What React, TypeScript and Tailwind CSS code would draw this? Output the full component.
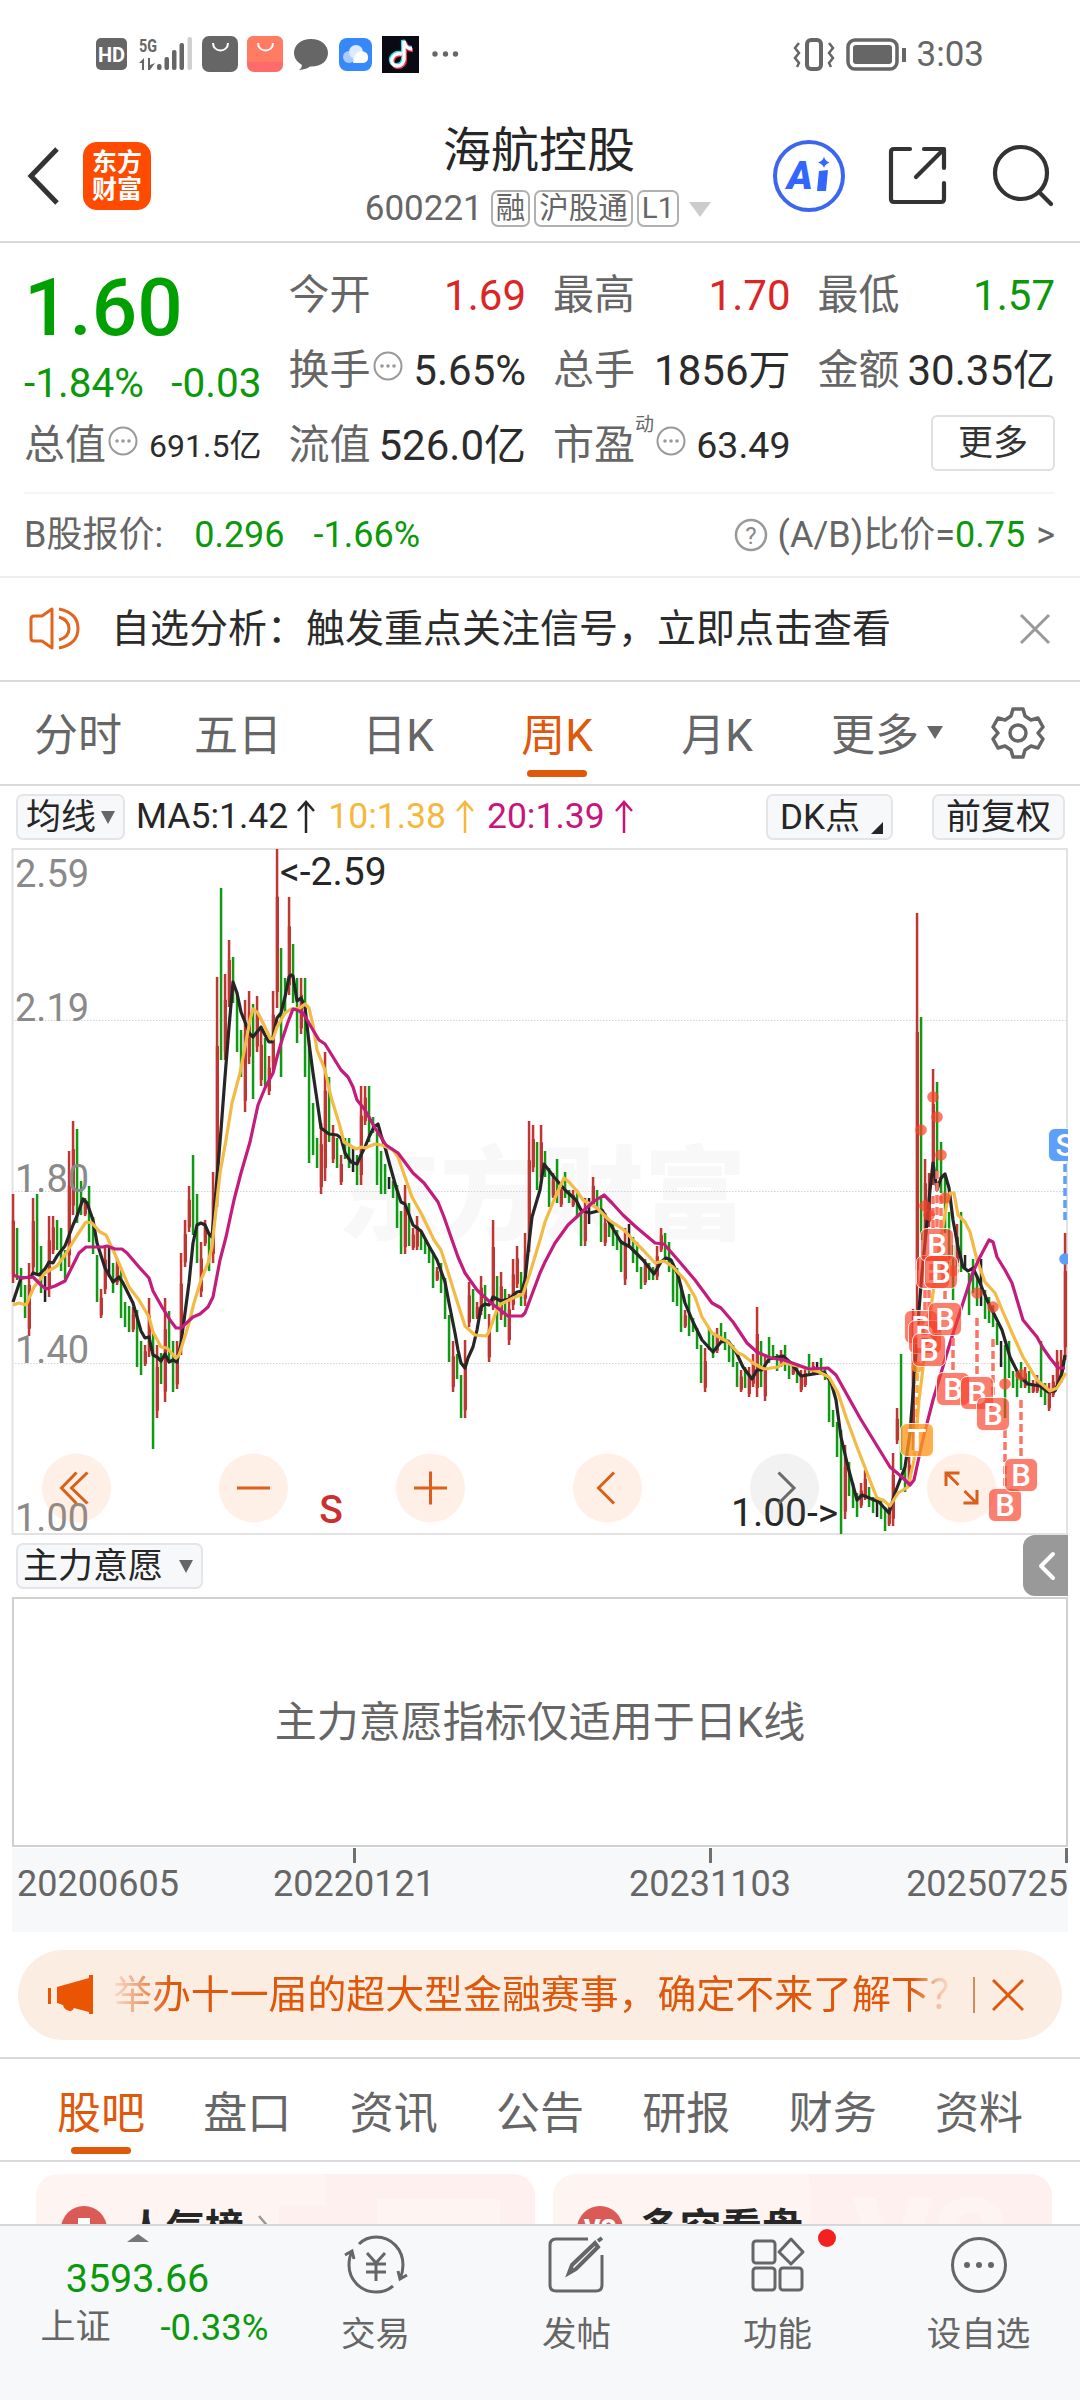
import React from 'react';
import clsx from 'clsx';

type Tone = 'up' | 'down' | 'plain';

const toneClasses: Record<Tone, string> = {
    up: 'text-[#dc2626]',
    down: 'text-[#0b980b]',
    plain: 'text-[#2b2b2b]'
};

// Weekly bars, one per 4px: colour, high, low
const candles = `
r1194-1283 g1228-1280 g1268-1297 g1285-1318 r1263-1336 r1198-1275 g1194-1275 g1246-1293 k1276-1302 r1216-1297
r1216-1254 g1220-1250 g1228-1271 g1250-1279 r1151-1267 r1121-1215 g1129-1223 g1181-1215 r1198-1216 g1186-1242
g1217-1254 g1255-1302 r1289-1318 r1245-1294 k1247-1277 g1263-1293 r1258-1285 g1268-1318 g1302-1327 g1306-1332
r1307-1332 g1310-1367 g1341-1375 r1345-1366 r1298-1357 g1332-1449 r1345-1418 g1353-1384 r1298-1402 g1311-1362
g1341-1392 r1341-1389 r1253-1355 r1220-1267 r1186-1232 g1155-1235 g1194-1263 r1242-1297 r1220-1246 g1235-1271
r1172-1263 r977-1207 g888-1060 r974-1060 r940-1007 g957-1003 g993-1052 g1030-1077 r1000-1112 r991-1064
g1004-1099 r996-1052 r1027-1086 g1038-1086 r1056-1095 r991-1070 r849-1008 g948-1077 g978-1013 r897-995
g944-1003 g978-1043 r978-1034 g978-1077 g1040-1163 g1103-1155 g1138-1168 r1123-1194 r1052-1181 g1077-1142
r1125-1163 g1138-1168 r1155-1185 g1138-1159 g1138-1168 k1147-1172 g1155-1185 r1086-1185 r1086-1125 g1086-1142
g1117-1133 g1133-1185 g1151-1194 g1164-1194 k1177-1189 g1181-1198 g1185-1228 g1211-1254 r1185-1254 g1203-1246
r1228-1250 r1216-1250 g1232-1250 g1240-1254 g1247-1263 g1252-1288 r1267-1281 g1263-1293 g1278-1319 g1315-1362
r1341-1392 g1354-1379 g1375-1418 r1340-1418 r1282-1327 g1289-1319 r1302-1319 r1276-1315 g1285-1319 r1314-1362
r1220-1310 g1276-1332 r1272-1320 g1289-1327 r1294-1345 r1259-1310 r1246-1288 g1272-1306 r1233-1306 r1121-1252
r1125-1172 g1142-1190 r1125-1183 g1151-1177 g1168-1207 r1173-1198 g1159-1203 r1183-1207 g1172-1198 g1190-1203
r1190-1207 g1190-1216 g1211-1246 r1198-1246 k1198-1224 r1177-1207 g1190-1210 g1198-1242 r1213-1246 g1220-1237
g1223-1246 g1230-1250 g1240-1272 r1228-1285 k1224-1247 g1237-1263 g1242-1272 g1267-1289 r1259-1285 g1263-1280
g1267-1280 r1246-1280 r1228-1252 g1233-1258 g1242-1272 g1263-1302 g1268-1306 g1285-1332 r1310-1328 g1294-1336
g1318-1332 g1328-1349 g1345-1383 r1348-1392 g1328-1350 g1332-1358 r1328-1353 g1323-1343 g1332-1350 g1341-1362
g1345-1367 g1362-1387 r1370-1392 g1367-1388 r1367-1397 r1354-1387 r1307-1397 g1341-1387 r1354-1401 g1337-1363
g1345-1357 g1354-1371 r1350-1367 g1345-1371 g1362-1379 r1363-1375 g1365-1383 r1370-1392 r1367-1387 g1354-1375
r1362-1375 k1362-1375 g1358-1375 g1367-1380 g1380-1422 g1410-1427 g1422-1457 g1430-1534 r1445-1519 g1462-1496
g1483-1508 g1493-1517 r1483-1508 r1470-1500 g1487-1507 g1497-1513 k1497-1517 g1500-1519 g1507-1531 r1505-1526
r1453-1526 r1408-1444 g1354-1470 g1467-1492 r1457-1483 r1309-1450 r913-1310 g1017-1240 r1159-1240 r1173-1227
r1069-1185 g1082-1173 g1142-1193 g1177-1233 g1212-1267 g1245-1300 r1224-1267 g1212-1272 k1255-1270 g1273-1315
g1259-1293 g1277-1306 k1259-1306 g1290-1319 g1297-1323 g1305-1327 g1323-1345 k1341-1367 g1345-1418 g1341-1378
g1371-1388 g1371-1397 g1362-1388 r1367-1388 g1371-1393 r1380-1393 r1375-1393 g1341-1397 g1383-1405 r1383-1411
r1375-1397 r1350-1388 r1350-1383 r1233-1360
`.trim().split(/\s+/).map((bar, i) => {
    const [high, low] = bar.slice(1).split('-').map(Number);
    return { kind: bar[0], x: 13 + i * 4, high, low };
});

const candleColors: Record<string, string> = { r: '#c03632', g: '#109a14', k: '#222222' };

const ma5 =
    '13,1302 21,1278 31,1277 33,1273 39,1275 45,1269 49,1262 53,1263 57,1256 65,1246 73,1225 77,1216 83,1199 87,1203 93,1220 97,1243 105,1268 113,1282 119,1277 123,1283 133,1303 141,1331 145,1338 149,1337 153,1355 157,1357 161,1361 165,1354 169,1362 173,1360 177,1362 181,1343 189,1283 193,1243 197,1225 201,1223 205,1225 209,1234 212,1237 216,1190 221,1130 225,1077 229,1027 233,982 237,993 241,1012 245,1022 249,1033 253,1037 257,1032 261,1027 265,1035 269,1042 272,1042 277,1018 281,1013 285,997 289,977 291,975 293,976 297,1001 301,998 305,1007 309,1043 313,1073 317,1100 321,1128 329,1134 337,1135 341,1138 345,1153 351,1162 357,1164 361,1155 365,1147 369,1137 374,1127 378,1124 381,1135 385,1147 389,1162 396,1187 401,1202 405,1204 413,1225 421,1231 429,1246 437,1260 445,1282 449,1303 455,1333 458,1350 461,1363 465,1368 468,1358 473,1347 477,1330 481,1307 485,1304 489,1305 493,1297 501,1301 509,1299 517,1292 522,1291 525,1280 529,1243 532,1217 537,1200 540,1190 544,1164 554,1177 565,1190 576,1200 581,1210 590,1213 602,1210 609,1222 621,1242 630,1247 643,1260 654,1274 661,1262 666,1258 671,1260 678,1275 685,1303 693,1322 702,1340 713,1352 721,1342 728,1341 736,1352 743,1367 752,1379 757,1370 762,1370 769,1359 783,1356 791,1363 801,1376 814,1374 824,1372 831,1382 836,1400 841,1437 848,1467 857,1500 862,1495 879,1502 889,1513 895,1493 905,1467 910,1433 915,1367 919,1310 922,1273 926,1233 930,1190 933,1163 937,1190 941,1178 945,1174 949,1188 953,1220 958,1247 963,1267 968,1271 973,1268 980,1283 987,1300 993,1312 1002,1330 1010,1357 1020,1377 1028,1384 1040,1386 1048,1392 1055,1391 1062,1373 1065,1355';
const ma10 =
    '13,1305 19,1303 26,1305 34,1287 45,1273 57,1266 65,1255 76,1237 86,1222 92,1223 100,1232 106,1235 113,1250 121,1268 129,1287 139,1300 149,1317 153,1332 161,1347 167,1348 176,1358 179,1355 186,1333 189,1323 194,1303 201,1280 208,1263 212,1247 217,1200 220,1173 226,1140 232,1103 240,1073 245,1047 250,1020 253,1009 258,1013 265,1027 270,1038 273,1039 277,1027 285,1013 291,1009 300,1008 305,1004 309,1008 313,1025 317,1050 325,1070 331,1097 339,1123 344,1142 356,1149 362,1147 365,1148 375,1144 382,1145 393,1150 398,1157 405,1177 412,1197 422,1215 434,1240 441,1250 448,1272 456,1298 465,1326 475,1335 486,1336 489,1332 496,1312 501,1304 513,1298 523,1294 530,1273 540,1240 545,1222 554,1200 564,1178 569,1182 576,1190 583,1200 597,1208 609,1220 624,1230 633,1240 643,1250 655,1263 664,1261 673,1267 685,1280 695,1297 702,1317 712,1333 728,1342 738,1353 743,1355 753,1363 764,1369 778,1367 784,1363 802,1367 819,1372 829,1377 838,1393 846,1417 857,1447 871,1483 877,1498 883,1500 890,1506 898,1493 908,1487 914,1460 919,1400 924,1360 933,1293 940,1243 947,1203 950,1193 954,1193 958,1215 965,1222 970,1232 977,1260 985,1282 995,1293 1003,1312 1013,1335 1023,1357 1037,1380 1050,1391 1057,1388 1063,1378 1066,1373';
const ma20 =
    '13,1275 21,1278 33,1277 41,1285 46,1289 55,1286 65,1281 72,1267 79,1253 86,1247 103,1247 107,1246 115,1249 122,1249 127,1253 139,1267 149,1278 153,1291 162,1307 170,1320 176,1328 181,1328 193,1317 200,1314 208,1307 213,1297 220,1260 226,1237 234,1200 241,1173 250,1142 258,1105 265,1088 273,1073 277,1057 282,1040 288,1022 293,1009 297,1010 303,1013 310,1025 319,1040 325,1044 341,1070 348,1077 353,1087 357,1100 365,1110 375,1128 386,1145 398,1153 413,1173 424,1183 438,1202 444,1217 452,1240 458,1257 465,1273 477,1290 491,1303 508,1316 522,1316 525,1313 540,1273 545,1262 555,1243 568,1225 581,1213 593,1202 604,1195 612,1203 623,1215 636,1227 655,1243 664,1244 678,1260 695,1280 712,1303 721,1308 733,1322 747,1343 757,1352 771,1358 784,1360 809,1369 828,1368 836,1375 860,1418 890,1467 902,1477 910,1485 914,1480 922,1443 933,1400 950,1343 973,1272 980,1257 989,1240 993,1242 997,1257 1005,1270 1012,1283 1023,1320 1037,1337 1043,1348 1050,1358 1058,1368 1065,1368';

const buyMarks = [
    [921, 1327], [925, 1337], [933, 1272], [937, 1245], [941, 1272], [929, 1350],
    [945, 1319], [953, 1389], [977, 1393], [993, 1414], [1005, 1505], [1021, 1475]
];
const buyDots = [
    [933, 1097], [937, 1117], [921, 1130], [941, 1155], [945, 1198], [925, 1206],
    [929, 1215], [953, 1271], [977, 1293], [993, 1307], [1005, 1384], [1021, 1375]
];
const buyDashes = [
    [933, 1196, 1229], [937, 1171, 1229], [941, 1196, 1229], [925, 1290, 1310], [929, 1290, 1334],
    [945, 1291, 1303], [953, 1338, 1373], [977, 1318, 1376], [993, 1339, 1398], [1005, 1430, 1489], [1021, 1400, 1459]
];

const Mark: React.FC<{ x: number; y: number; label: string; color: string }> = ({ x, y, label, color }) => (
    <g>
        <rect x={x - 16.5} y={y - 16.5} width="33" height="33" rx="6.5" fill={color} stroke="#ffffff" strokeOpacity="0.85" />
        <text x={x} y={y + 11} textAnchor="middle" fontSize="31" fontWeight="500" fill="#ffffff">
            {label}
        </text>
    </g>
);

const ChartButton: React.FC<{ x: number; muted?: boolean; children: React.ReactNode }> = ({ x, muted, children }) => (
    <g transform={`translate(${x} 1488)`} fill="none" stroke={muted ? '#6b6b6b' : '#d9601a'} strokeWidth="3">
        <circle r="34.5" fill={muted ? '#888888' : '#fa7a3c'} fillOpacity={muted ? 0.11 : 0.12} stroke="none" />
        {children}
    </g>
);

const KLineChart: React.FC = () => (
    <svg className="block w-full" height="687" viewBox="0 848 1080 687">
        <clipPath id="plot">
            <rect x="0" y="848" width="1068" height="687" />
        </clipPath>
        <text x="338" y="1232" fontSize="102" fontWeight="900" fill="#f8f8f8">东方财富</text>
        <g stroke="#d4d4d4" strokeWidth="1.2" strokeDasharray="1.5 1.5">
            <path d="M12 1020.5H1067M12 1191.5H1067M12 1363.5H1067" />
        </g>
        <rect x="12.5" y="849" width="1054.5" height="685" fill="none" stroke="#e2e2e2" strokeWidth="2" />
        {candles.map((c) => (
            <g key={c.x} fill={candleColors[c.kind]}>
                <rect x={c.x - 1.2} y={c.high} width="2.5" height={c.low - c.high} />
                {c.kind === 'r' && (
                    <rect x={c.x - 1.2} y={c.high + (c.low - c.high) * 0.3} width="3.2" height={(c.low - c.high) * 0.6} />
                )}
            </g>
        ))}
        <g fill="none" strokeWidth="3.2" strokeLinejoin="round">
            <polyline points={ma5} stroke="#262626" />
            <polyline points={ma10} stroke="#f3ba45" />
            <polyline points={ma20} stroke="#c41c7c" />
        </g>
        <g fontSize="38" fill="#8a8a8a">
            <text x="15" y="887">2.59</text>
            <text x="15" y="1021">2.19</text>
            <text x="15" y="1192">1.80</text>
            <text x="15" y="1363">1.40</text>
            <text x="15" y="1531">1.00</text>
        </g>
        <g fontSize="39" fill="#262626">
            <text x="280" y="885">&lt;-2.59</text>
            <text x="731" y="1526">1.00-&gt;</text>
        </g>
        <text x="331" y="1523" textAnchor="middle" fontSize="39" fontWeight="500" fill="#cc2f2f">S</text>

        <ChartButton x={76.5}>
            <path d="M0 -15.500L-15 0L0 15.500M11 -15.500L-5 0L11 15.500" />
        </ChartButton>
        <ChartButton x={253.5}>
            <path d="M-16.500 0H16.500" />
        </ChartButton>
        <ChartButton x={430.5}>
            <path d="M-16.500 0H16.500M0 -16.500V16.500" />
        </ChartButton>
        <ChartButton x={607.5}>
            <path d="M6.500 -15.500L-9 0L6.500 15.500" />
        </ChartButton>
        <ChartButton x={784.5} muted>
            <path d="M-6 -15.500L9.500 0L-6 15.500" />
        </ChartButton>
        <ChartButton x={961.5}>
            <path d="M-15.500 -2V-15H-2M-15 -15L-3 -3M15.500 2V15H2M15 15L3 3" />
        </ChartButton>

        <g clipPath="url(#plot)">
            <g stroke="#fb7564" strokeWidth="3.5" strokeDasharray="8 4">
                {buyDashes.map(([x, y1, y2]) => (
                    <line key={x} x1={x} x2={x} y1={y1} y2={y2} />
                ))}
            </g>
            <line x1="917" x2="917" y1="1373" y2="1424" stroke="#ffa53a" strokeWidth="3.5" strokeDasharray="8 4" />
            <line x1="1065" x2="1065" y1="1164" y2="1222" stroke="#5f9ffc" strokeWidth="3.5" strokeDasharray="8 4" />
            {buyDots.map(([x, y]) => (
                <circle key={`${x}-${y}`} cx={x} cy={y} r="5.8" fill="#f9452c" fillOpacity="0.72" />
            ))}
            <circle cx="917" cy="1367" r="5.8" fill="#ff9a20" fillOpacity="0.8" />
            <circle cx="1065" cy="1259" r="5.8" fill="#5f9ffc" />
            {buyMarks.map(([x, y]) => (
                <Mark key={`${x}-${y}`} x={x} y={y} label="B" color="rgba(249,66,42,0.68)" />
            ))}
            <Mark x={917} y={1440} label="T" color="rgba(255,153,35,0.8)" />
            <Mark x={1065} y={1145} label="S" color="#5f9ffc" />
        </g>
    </svg>
);

const StatusBar: React.FC = () => (
    <div className="flex h-[110px] items-start justify-between pl-[80px] pr-[96px] pt-[25px] text-[#666]">
        <svg width="400" height="60" viewBox="0 0 400 60" fill="#666666">
            <rect x="16" y="13" width="31" height="32" rx="5" />
            <text x="31.500" y="37" textAnchor="middle" fontSize="20" fontWeight="700" fill="#ffffff">HD</text>
            <text x="59" y="27" fontSize="19" fontWeight="700" textLength="18" lengthAdjust="spacingAndGlyphs">5G</text>
            <path d="M59 38L64 33V45H62V38ZM68 33H70V40L75 38L70 45H68Z" />
            <rect x="77" y="39" width="4.500" height="6" rx="2" />
            <rect x="84.500" y="32" width="4.500" height="13" rx="2" />
            <rect x="92" y="25" width="4.500" height="20" rx="2" />
            <rect x="99.500" y="18" width="4.500" height="27" rx="2" />
            <rect x="107.500" y="12" width="4.500" height="33" rx="2" fill="#d0d0d0" />
            <rect x="122" y="11" width="36" height="36" rx="7" />
            <path d="M133 18C133 28 148 28 148 18" fill="none" stroke="#ffffff" strokeWidth="2" />
            <rect x="167" y="11" width="36" height="36" rx="7" fill="#ff6a6a" />
            <path d="M167 37V18Q167 11 174 11H196Q203 11 203 18V37Z" fill="#ff7b62" />
            <path d="M178 18C178 28 193 28 193 18" fill="none" stroke="#ffffff" strokeWidth="2" />
            <path d="M231 14C221 14 214 20 214 28C214 33 217 37 222 40Q222 43 219 45Q227 44 230 41.500C241 42 248 36 248 28C248 20 241 14 231 14Z" />
            <rect x="259" y="13" width="33" height="33" rx="8" fill="#3789fb" />
            <circle cx="269" cy="32" r="6" fill="#a9cdff" />
            <circle cx="276" cy="27" r="7" fill="#dcebff" />
            <path d="M273 38Q274 26 282 26Q289 27 288 34Q287 38 282 38Z" fill="#ffffff" />
            <rect x="302" y="11" width="37" height="37" fill="#0a0a14" />
            <g fill="none" strokeWidth="4">
                <path d="M321 28C310 26 307 39 316 40C320 40 323 37 323 33V15C324 20 327 23 332 23" stroke="#25e0e0" />
                <path d="M323 30C312 28 309 41 318 42C322 42 325 39 325 35V17C326 22 329 25 333 25" stroke="#f5315a" />
                <path d="M322 29C311 27 308 40 317 41C321 41 324 38 324 34V16C325 21 328 24 332 24" stroke="#ffffff" strokeWidth="3.500" />
            </g>
            <circle cx="355" cy="29" r="2.700" />
            <circle cx="365.500" cy="29" r="2.700" />
            <circle cx="375.500" cy="29" r="2.700" />
        </svg>
        <div className="flex items-center pt-[11px]">
            <svg width="124" height="36" viewBox="0 0 124 36" fill="none" stroke="#666666">
                <rect x="14" y="3" width="14" height="29" rx="4" strokeWidth="4" />
                <path d="M6 6L2 11L6 16L2 21L6 26L4 30M36 6L40 11L36 16L40 21L36 26L38 30" strokeWidth="2.500" />
                <rect x="55" y="3" width="49" height="29" rx="7" strokeWidth="3.500" />
                <rect x="60" y="8" width="39" height="19" rx="3" fill="#666666" stroke="none" />
                <path d="M111 11V25" strokeWidth="4" />
            </svg>
            <span className="pt-px text-[35px] leading-[36px]">3:03</span>
        </div>
    </div>
);

const Tag: React.FC<{ children: React.ReactNode }> = ({ children }) => (
    <span className="flex h-[37px] shrink-0 items-center whitespace-nowrap rounded-[7px] border-2 border-[#b0b0b0] px-[3px] text-[29.500px] leading-none">
        {children}
    </span>
);

const Header: React.FC = () => (
    <header className="flex h-[133px] items-center border-b-2 border-[#d9d9d9] pl-[26px] pr-[26px]">
        <svg width="36" height="60" viewBox="0 0 36 60" fill="none" stroke="#333333" strokeWidth="5">
            <path d="M31 3L5 30L31 57" />
        </svg>
        <div className="ml-[21px] flex size-[68px] flex-col items-center justify-center rounded-[14px] bg-[#ff4b00] text-[25px] font-bold leading-[27px] text-white">
            <span>东方</span>
            <span>财富</span>
        </div>
        <div className="ml-[212px] flex w-[350px] flex-col items-center">
            <h1 className="ml-[2px] text-[48px] leading-[56px] text-[#262626]">海航控股</h1>
            <div className="mt-[10px] flex items-center gap-[4px] text-[#666]">
                <span className="mr-[4px] text-[35px] leading-[40px]">600221</span>
                <Tag>融</Tag>
                <Tag>沪股通</Tag>
                <Tag>L1</Tag>
                <svg className="ml-[6px] shrink-0" width="22" height="16" viewBox="0 0 22 16">
                    <path d="M0 1H22L11 16Z" fill="#cccccc" />
                </svg>
            </div>
        </div>
        <svg className="ml-auto" width="74" height="74" viewBox="0 0 74 74">
            <circle cx="37" cy="37" r="34" fill="none" stroke="#3d66f0" strokeWidth="4" />
            <text x="15" y="50" fontSize="39" fontWeight="900" fontStyle="italic" fill="#3366ff">A</text>
            <path d="M47 32L56 31L54 52H45Z" fill="#3366ff" />
            <path d="M52 17.500Q53 22 57.500 23.500Q53 25 52 29Q51 25 46 23.500Q51 22 52 17.500Z" fill="#3366ff" />
        </svg>
        <svg className="ml-[42px]" width="60" height="62" viewBox="0 0 60 62" fill="none" stroke="#333333" strokeWidth="4.200" strokeLinecap="round" strokeLinejoin="round">
            <path d="M22 4H6Q3 4 3 7V54Q3 57 6 57H53Q56 57 56 54V38M36 4H56V23M55 5L28 32" />
        </svg>
        <svg className="ml-[44px]" width="62" height="66" viewBox="0 0 62 66" fill="none" stroke="#333333" strokeWidth="4.200" strokeLinecap="round">
            <circle cx="29" cy="30" r="26" />
            <path d="M47 49L59 61" />
        </svg>
    </header>
);

const InfoDots: React.FC = () => (
    <svg className="ml-[2px] mb-[10px] shrink-0" width="30" height="30" viewBox="0 0 30 30">
        <circle cx="15" cy="15" r="13.500" fill="none" stroke="#999999" strokeWidth="2" />
        <g fill="#999999">
            <circle cx="9" cy="15" r="1.800" />
            <circle cx="15" cy="15" r="1.800" />
            <circle cx="21" cy="15" r="1.800" />
        </g>
    </svg>
);

interface QuoteProps {
    label: string;
    value: string;
    tone?: Tone;
    info?: boolean;
    sup?: string;
    valueClass?: string;
}

const Quote: React.FC<QuoteProps> = ({ label, value, tone = 'plain', info, sup, valueClass = 'text-[42px]' }) => (
    <div className="flex h-[75px] items-center whitespace-nowrap leading-none">
        <span className="text-[41px] text-[#666]">{label}</span>
        {sup && <span className="-mt-[42px] text-[19px] text-[#666]">{sup}</span>}
        {info && <InfoDots />}
        <span className={clsx('ml-auto', valueClass, toneClasses[tone])}>{value}</span>
    </div>
);

const QuoteBoard: React.FC = () => (
    <section className="pl-[24px] pr-[25px]">
        <div className="grid h-[251px] grid-cols-4 grid-rows-[75px_75px_75px] gap-x-[27px] border-b-2 border-[#f5f5f5] pt-[15px]">
            <div className="row-span-2 flex flex-col text-[#00a000]">
                <span className="h-[102px] text-[80px] font-medium leading-[101px]">1.60</span>
                <div className="flex justify-between text-[40.500px] leading-[47px] text-[#0b980b]">
                    <span>-1.84%</span>
                    <span>-0.03</span>
                </div>
            </div>
            <Quote label="今开" value="1.69" tone="up" />
            <Quote label="最高" value="1.70" tone="up" />
            <Quote label="最低" value="1.57" tone="down" />
            <Quote label="换手" value="5.65%" info />
            <Quote label="总手" value="1856万" />
            <Quote label="金额" value="30.35亿" />
            <Quote label="总值" value="691.5亿" info valueClass="text-[32px]" />
            <Quote label="流值" value="526.0亿" />
            <Quote label="市盈" value="63.49" info sup="动" valueClass="text-[37.500px]" />
            <div className="flex items-center justify-end">
                <button className="-mt-[5px] h-[56px] w-[124px] rounded-[6px] border-2 border-[#e0e0e0] text-[35px] leading-none text-[#333]">
                    更多
                </button>
            </div>
        </div>
        <div className="flex h-[82px] items-center text-[36px] leading-none text-[#666]">
            <span>B股报价:</span>
            <span className="ml-[31px] text-[#0b980b]">0.296</span>
            <span className="ml-[29px] text-[#0b980b]">-1.66%</span>
            <svg className="ml-auto mr-[10px]" width="34" height="34" viewBox="0 0 34 34">
                <circle cx="17" cy="17" r="15" fill="none" stroke="#999999" strokeWidth="2.500" />
                <text x="17" y="25.500" textAnchor="middle" fontSize="24" fill="#888888">?</text>
            </svg>
            <span>(A/B)比价=</span>
            <span className="text-[#0b980b]">0.75</span>
            <span className="ml-[11px]">&gt;</span>
        </div>
    </section>
);

const Notice: React.FC = () => (
    <div className="flex h-[106px] items-center border-b-2 border-t-2 border-b-[#d9d9d9] border-t-[#eeeeee] pl-[28px] pr-[29px]">
        <svg width="54" height="46" viewBox="0 0 54 46" fill="none" stroke="#e0661f" strokeWidth="3" strokeLinejoin="round">
            <path d="M24 3L14 10H6Q3 10 3 13V32Q3 35 6 35H14L24 42Z" />
            <path d="M31 11Q41 14 41 22.500Q41 31 31 34" />
            <path d="M31 3Q50 7 50 22.500Q50 38 31 42" />
        </svg>
        <p className="ml-[29px] whitespace-nowrap text-[39px] leading-none text-[#2b2b2b]">
            自选分析：触发重点关注信号，立即点击查看
        </p>
        <svg className="ml-auto" width="32" height="32" viewBox="0 0 32 32" stroke="#999999" strokeWidth="3">
            <path d="M2 2L30 30M30 2L2 30" />
        </svg>
    </div>
);

const periods = [
    { label: '分时', className: 'w-[88px]' },
    { label: '五日', className: 'ml-[72px] w-[88px]' },
    { label: '日K', className: 'ml-[76px] w-[80px]' },
    { label: '周K', className: 'ml-[79px] w-[80px]', active: true },
    { label: '月K', className: 'ml-[80px] w-[80px]' },
    { label: '更多', className: 'ml-[74px] w-[88px]' }
];

const PeriodTabs: React.FC = () => (
    <nav className="flex h-[104px] items-center border-b-2 border-[#d9d9d9] pl-[34px] pr-[35px]">
        {periods.map((p) => (
            <div
                key={p.label}
                className={clsx('flex h-full flex-col items-center whitespace-nowrap', p.className, p.active ? 'text-[#e0580c]' : 'text-[#666]')}
            >
                <span className="mt-[24px] text-[44px] leading-[60px]">{p.label}</span>
                {p.active && <span className="mt-[4px] h-[7px] w-[60px] rounded-full bg-[#e0580c]" />}
            </div>
        ))}
        <svg className="ml-[8px]" width="16" height="14" viewBox="0 0 16 14">
            <path d="M0 0H16L8 13Z" fill="#666666" />
        </svg>
        <svg className="ml-auto" width="54" height="54" viewBox="0 0 54 54" fill="none" stroke="#666666" strokeWidth="3.500" strokeLinejoin="round">
            <path d="M22 3H32L34 10L40 14L47 12L52 21L47 27L52 33L47 42L40 40L34 44L32 51H22L20 44L14 40L7 42L2 33L7 27L2 21L7 12L14 14L20 10Z" />
            <circle cx="27" cy="27" r="8" />
        </svg>
    </nav>
);

const Arrow: React.FC<{ className?: string }> = ({ className }) => (
    <svg className={className} width="20" height="34" viewBox="0 0 20 34" fill="none" stroke="currentColor" strokeWidth="2.500">
        <path d="M10 33V2M2 11L10 2L18 11" />
    </svg>
);

const Down: React.FC<{ className?: string }> = ({ className }) => (
    <svg className={className} width="14" height="13" viewBox="0 0 14 13">
        <path d="M0 0H14L7 13Z" fill="#666666" />
    </svg>
);

const pill = 'flex h-[46px] items-center rounded-[7px] border-2 border-[#e3e5e8] bg-[#f7f8fa] text-[35px] leading-none text-[#262626]';

const IndicatorRow: React.FC = () => (
    <div className="flex h-[62px] items-center whitespace-nowrap pl-[16px] pr-[15px] text-[35.500px] leading-none text-[#262626]">
        <div className={clsx(pill, 'w-[109px] pl-[8px]')}>
            均线
            <Down className="ml-[5px]" />
        </div>
        <span className="ml-[11px]">MA5:1.42</span>
        <Arrow className="ml-[8px]" />
        <span className="ml-[12px] flex items-center text-[#f5b83d]">
            10:1.38
            <Arrow className="ml-[9px]" />
        </span>
        <span className="ml-[12px] flex items-center text-[#c8157c]">
            20:1.39
            <Arrow className="ml-[9px]" />
        </span>
        <div className={clsx(pill, 'ml-auto w-[127px] pl-[12px]')}>
            DK点
            <svg className="ml-[11px] mt-[22px]" width="12" height="12" viewBox="0 0 12 12">
                <path d="M12 0V12H0Z" fill="#262626" />
            </svg>
        </div>
        <div className={clsx(pill, 'ml-[39px] w-[133px] justify-center')}>前复权</div>
    </div>
);

const WillPanel: React.FC = () => (
    <section className="pl-[12px] pr-[12px]">
        <div className="flex h-[62px] items-start justify-between pl-[4px]">
            <div className={clsx(pill, 'mt-[8px] w-[187px] justify-between pl-[5px] pr-[8px]')}>
                主力意愿
                <Down />
            </div>
            <div className="flex h-[61px] w-[45px] items-center justify-center rounded-l-[12px] bg-[#999999] pl-[3px]">
                <svg width="18" height="30" viewBox="0 0 18 30" fill="none" stroke="#ffffff" strokeWidth="4" strokeLinecap="round" strokeLinejoin="round">
                    <path d="M15 3L3 15L15 27" />
                </svg>
            </div>
        </div>
        <div className="flex h-[250px] items-center justify-center border-2 border-[#d0d0d0] text-[42px] text-[#666]">
            主力意愿指标仅适用于日K线
        </div>
        <div className="mt-[1px] grid h-[84px] grid-cols-[158px_1fr_1fr_1fr] bg-[#f7f8fa] text-[36px] leading-[42px] text-[#666]">
            <span className="mt-[15px] pl-[5px]">20200605</span>
            <div className="col-span-3 flex justify-between">
                <div className="ml-[94px] flex w-[180px] flex-col items-center">
                    <span className="h-[15px] w-[3px] bg-[#707070]" />
                    <span>20220121</span>
                </div>
                <div className="ml-[88px] flex w-[180px] flex-col items-center">
                    <span className="h-[15px] w-[3px] bg-[#707070]" />
                    <span>20231103</span>
                </div>
                <div className="flex w-[180px] flex-col items-end">
                    <span className="h-[15px] w-[3px] bg-[#707070]" />
                    <span>20250725</span>
                </div>
            </div>
        </div>
    </section>
);

const PromoBanner: React.FC = () => (
    <div className="mt-[18px] border-b-2 border-[#d9d9d9] px-[18px] pb-[17px]">
        <div className="flex h-[90px] items-center rounded-full bg-[#fcede3] pl-[29px] pr-[38px]">
            <svg width="48" height="40" viewBox="0 0 48 40" fill="#ea5504">
                <path d="M1 13H4V29H1ZM10 12L42 3V0H46V39H42V37L27 33Q25 38 20 35Q17 34 16 30L10 28Z" />
            </svg>
            <p className="ml-[18px] w-[842px] overflow-hidden whitespace-nowrap text-[38.900px] leading-[60px] text-[#de570b] [mask-image:linear-gradient(to_right,rgba(0,0,0,0.1),black_7%,black_95%,rgba(0,0,0,0.3)_98%,transparent)]">
                举办十一届的超大型金融赛事，确定不来了解下？
            </p>
            <span className="ml-auto mr-[17px] h-[36px] w-[2px] bg-[#d98a5c]" />
            <svg width="32" height="34" viewBox="0 0 32 34" stroke="#de570b" strokeWidth="3">
                <path d="M1 2L31 32M31 2L1 32" />
            </svg>
        </div>
    </div>
);

const sections = ['股吧', '盘口', '资讯', '公告', '研报', '财务', '资料'];

const SectionTabs: React.FC = () => (
    <nav className="flex h-[103px] justify-between border-b-2 border-[#d9d9d9] px-[57px]">
        {sections.map((name, i) => (
            <div key={name} className={clsx('flex flex-col items-center', i === 0 ? 'text-[#e0580c]' : 'text-[#666]')}>
                <span className="mt-[25px] text-[44px] leading-[60px]">{name}</span>
                {i === 0 && <span className="mt-[3px] h-[7px] w-[60px] rounded-full bg-[#e0580c]" />}
            </div>
        ))}
    </nav>
);

const CommunityCards: React.FC = () => (
    <div className="flex h-[62px] justify-between overflow-hidden pl-[36px] pr-[28px] pt-[12px]">
        <div className="relative h-[120px] w-[499px] overflow-hidden rounded-[22px] bg-[#fef5f3]">
            <svg className="absolute inset-0" width="499" height="120" viewBox="0 0 499 120">
                <path d="M243 32H290V0H499V120H243Z" fill="#fdf0ee" />
                <path d="M341 25H464V120H341Z" fill="#fef4f2" />
            </svg>
            <div className="relative flex items-center pl-[25px] pt-[29px] text-[39px] font-bold leading-[52px] text-[#262626]">
                <svg width="46" height="46" viewBox="0 0 46 46">
                    <circle cx="23" cy="23" r="23" fill="#dc5a55" />
                    <path d="M17 12H29V36H17Z" fill="#ffffff" />
                </svg>
                <span className="ml-[20px]">人气榜</span>
                <svg className="ml-[14px]" width="14" height="28" viewBox="0 0 14 28" fill="none" stroke="#999999" strokeWidth="2.500">
                    <path d="M1 1L12 14L1 27" />
                </svg>
            </div>
        </div>
        <div className="relative h-[120px] w-[499px] overflow-hidden rounded-[22px] bg-[#fef5f3]">
            <svg className="absolute inset-0" width="499" height="120" viewBox="0 0 499 120">
                <path d="M256 0H499V120H262Z" fill="#fdf0ee" />
                <text x="300" y="110" fontSize="120" fontWeight="900" fill="#fef5f3">VS</text>
            </svg>
            <div className="relative flex items-center pl-[24px] pt-[29px] text-[41px] font-bold leading-[52px] text-[#262626]">
                <svg width="46" height="46" viewBox="0 0 46 46">
                    <circle cx="23" cy="23" r="23" fill="#dc5a55" />
                    <text x="23" y="32" textAnchor="middle" fontSize="25" fontWeight="900" fill="#ffffff">VS</text>
                </svg>
                <span className="ml-[16px]">多空看盘</span>
            </div>
        </div>
    </div>
);

const NavItem: React.FC<{ label: string; badge?: boolean; children: React.ReactNode }> = ({ label, badge, children }) => (
    <div className="flex w-[201px] flex-col items-center pt-[9px]">
        <div className="relative">
            <svg width="66" height="60" viewBox="0 0 66 60" fill="none" stroke="#666666" strokeWidth="3">
                {children}
            </svg>
            {badge && <span className="absolute -right-[25px] -top-[6px] size-[18px] rounded-full bg-[#f52020]" />}
        </div>
        <span className="mt-[13px] text-[34.500px] leading-[52px] text-[#666]">{label}</span>
    </div>
);

const BottomNav: React.FC = () => (
    <footer className="flex h-[176px] border-t-2 border-[#d5d7da] bg-[#f7f8fa]">
        <div className="flex w-[275px] flex-col items-center">
            <svg className="mt-[8px]" width="22" height="8" viewBox="0 0 22 8">
                <path d="M11 0L22 8H0Z" fill="#777777" />
            </svg>
            <span className="mt-[15px] text-[39.500px] leading-[44px] text-[#0b980b]">3593.66</span>
            <div className="mt-[4px] flex w-[228px] items-center justify-between text-[35px] leading-[46px] text-[#666]">
                <span className="ml-[17px]">上证</span>
                <span className="mr-[-17px] text-[36.500px] text-[#0b980b]">-0.33%</span>
            </div>
        </div>
        <NavItem label="交易">
            <path d="M16 9Q23 2 33 2C49 2 60 15 60 30Q60 37 57 44M50 51Q43 57 33 57C17 57 6 44 6 30Q6 22 9 17" />
            <path d="M2 20L9 16L11 24M64 40L57 44L55 36" />
            <path d="M24 18L33 28L42 18M33 28V46M23 29H43M23 37H43" />
        </NavItem>
        <NavItem label="发帖">
            <path d="M44 4H12Q6 4 6 10V50Q6 56 12 56H52Q58 56 58 50V20" />
            <path d="M25 38L28 30L51 8L54 12L32 34ZM54 6L58 3" strokeWidth="4" />
        </NavItem>
        <NavItem label="功能" badge>
            <rect x="8" y="6" width="22" height="22" rx="3" />
            <rect x="8" y="33" width="22" height="22" rx="3" />
            <rect x="35" y="33" width="22" height="22" rx="3" />
            <path d="M46 4L58 17L46 29L34 17Z" strokeLinejoin="round" />
        </NavItem>
        <NavItem label="设自选">
            <circle cx="33" cy="30" r="26.500" />
            <g fill="#666666" stroke="none">
                <circle cx="21" cy="30" r="3" />
                <circle cx="33" cy="30" r="3" />
                <circle cx="45" cy="30" r="3" />
            </g>
        </NavItem>
    </footer>
);

const App: React.FC = () => {
    return (
        <div className="flex h-[2400px] w-[1080px] flex-col overflow-hidden bg-white font-['Roboto','Noto_Sans_CJK_SC',sans-serif] [&>*]:shrink-0">
            <StatusBar />
            <Header />
            <QuoteBoard />
            <Notice />
            <PeriodTabs />
            <IndicatorRow />
            <KLineChart />
            <WillPanel />
            <PromoBanner />
            <SectionTabs />
            <CommunityCards />
            <BottomNav />
        </div>
    );
};

export default App;
